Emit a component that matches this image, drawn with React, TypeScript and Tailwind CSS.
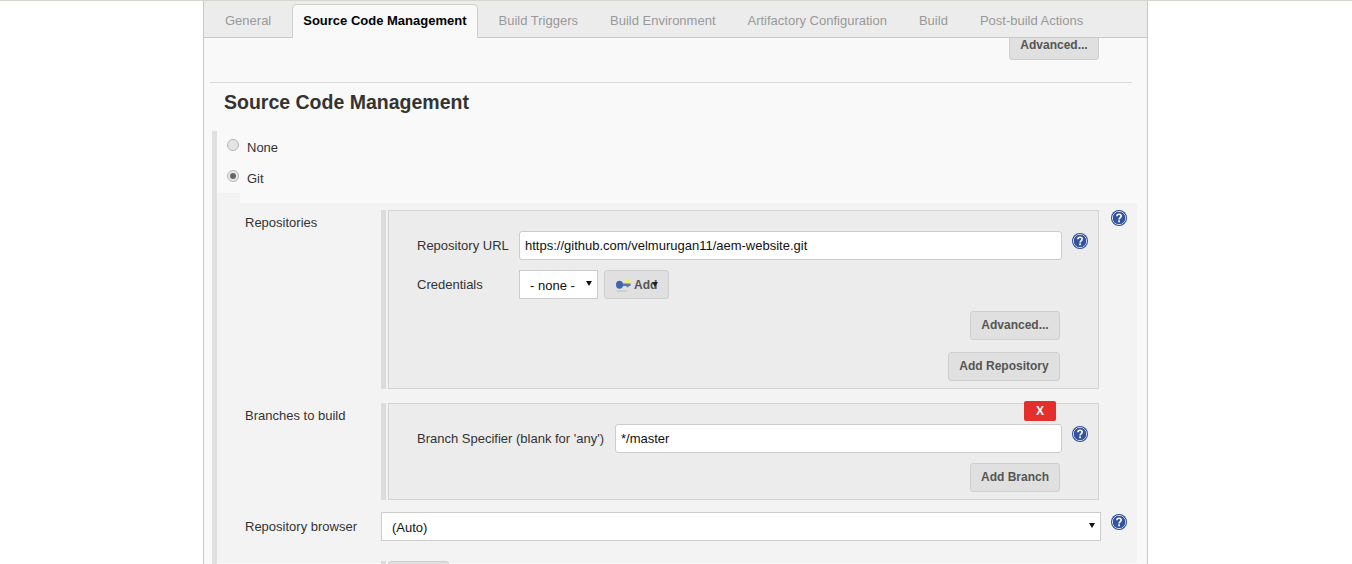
const TABS = [
  "General",
  "Source Code Management",
  "Build Triggers",
  "Build Environment",
  "Artifactory Configuration",
  "Build",
  "Post-build Actions",
];

function HelpIcon() {
  return (
    <svg width="16" height="16" viewBox="0 0 16 16" className="shrink-0 block">
      <circle cx="8" cy="8" r="8" fill="#2f4c96" />
      <circle cx="8" cy="8" r="6.6" fill="none" stroke="#dfe5f3" strokeWidth="0.9" />
      <circle cx="8" cy="8" r="6" fill="#33539f" />
      <path d="M5.9 6.2c0-1.3 1-2 2.2-2s2.1.8 2.1 1.9c0 1.7-2.1 1.7-2.1 3.3" fill="none" stroke="#fff" strokeWidth="1.6" />
      <rect x="7.2" y="10.4" width="1.8" height="1.8" fill="#fff" />
    </svg>
  );
}

function KeyIcon() {
  return (
    <svg width="16" height="16" viewBox="0 0 16 16" className="shrink-0 block">
      <ellipse cx="7" cy="14" rx="6" ry="1" fill="#cdcdcd" />
      <rect x="10" y="2.5" width="4" height="3.5" fill="#f5f04a" />
      <path d="M6 6.5h9.5v2.6h-2v1.2h-2v-1.2H6z" fill="#5577bb" />
      <ellipse cx="4.5" cy="7.8" rx="3.5" ry="4" fill="#3f63ad" />
    </svg>
  );
}

function Btn({ children, className = "" }: { children: React.ReactNode; className?: string }) {
  return (
    <button
      className={`h-[29px] rounded-[3px] border border-[#cfcfcf] bg-[#e0e0e0] text-[12px] font-bold text-[#555] ${className}`}
    >
      {children}
    </button>
  );
}

function Strip() {
  return <div className="w-[5px] shrink-0 bg-[#dcdcdc]" />;
}

function Caret() {
  return (
    <span className="pointer-events-none absolute right-[6px] top-[11px] h-0 w-0 border-x-[3px] border-t-[5px] border-x-transparent border-t-[#111]" />
  );
}

export default function App() {
  return (
    <div className="h-[564px] overflow-hidden bg-white border-t border-[#d3d7cf] font-['Liberation_Sans',Arial,sans-serif] text-[13px] text-[#333]">
      <div className="ml-[203px] w-[945px] h-full border-x border-[#c8c8c8] bg-[#f9f9f9]">
        {/* Tabs */}
        <div className="relative z-10 flex h-[37px] gap-[10px] border-b border-[#c8c8c8] bg-[#ececec] pl-[10px] pt-[3px]">
          {TABS.map((tab) =>
            tab === "Source Code Management" ? (
              <div
                key={tab}
                className="h-[34px] rounded-t-[5px] border border-b-0 border-[#cfcfcf] bg-[#f9f9f9] px-[10px] pt-[8px] leading-[16px] font-bold text-black"
              >
                {tab}
              </div>
            ) : (
              <div key={tab} className="h-[33px] px-[11px] pt-[9px] leading-[16px] text-[#999]">
                {tab}
              </div>
            )
          )}
        </div>

        <div className="-mt-[8px] flex justify-end pr-[48px]">
          <Btn className="w-[90px] h-[30px]">Advanced...</Btn>
        </div>

        <div className="ml-[6px] mr-[15px] mt-[22px] border-t border-[#d9d9d9]" />
        <h2 className="pl-[20px] pt-[8px] h-[48px] text-[19.5px] leading-[22px] font-bold text-[#333]">
          Source Code Management
        </h2>

        {/* SCM block */}
        <div className="ml-[8px] border-l-[5px] border-[#e0e0e0] h-[500px]">
          <div className="flex h-[32px] items-center pl-[10px]">
            <span className="-mt-[4px] block h-[12px] w-[12px] rounded-full border border-[#b5b5b5] bg-[#e4e4e4]" />
            <span className="ml-[8px] mt-[2px]">None</span>
          </div>
          <div className="flex h-[30px] items-center pl-[10px]">
            <span className="-mt-[4px] flex h-[12px] w-[12px] items-center justify-center rounded-full border border-[#b5b5b5] bg-[#e8e8e8]">
              <span className="block h-[6px] w-[6px] rounded-full bg-[#666]" />
            </span>
            <span className="ml-[8px] mt-[2px]">Git</span>
          </div>
          <div className="h-[10px] w-[23px] bg-[#f3f3f3]" />

          <div className="h-[360px] w-[920px] bg-[#f3f3f3] pt-[7px]">
            {/* Repositories */}
            <div className="flex">
              <div className="w-[164px] shrink-0 pl-[28px] pt-[5px] leading-[15px]">Repositories</div>
              <Strip />
              <div className="ml-[2px] h-[179px] w-[711px] border border-[#d3d3d3] bg-[#ececec] pl-[28px] pr-[10px] pt-[20px]">
                <div className="flex h-[29px] items-center">
                  <span className="w-[102px] shrink-0">Repository URL</span>
                  <input
                    readOnly
                    value="https://github.com/velmurugan11/aem-website.git"
                    className="h-[29px] w-[543px] rounded-[3px] border border-[#ccc] bg-white px-[5px] text-[13px] text-[#111] outline-none"
                  />
                  <span className="ml-[10px] -mt-[9px]"><HelpIcon /></span>
                </div>
                <div className="mt-[10px] flex h-[29px] items-center">
                  <span className="w-[102px] shrink-0">Credentials</span>
                  <div className="relative h-[29px] w-[79px]">
                    <select className="h-full w-full appearance-none border border-[#ccc] bg-white pl-[10px] pt-[2px] text-[13px] text-[#111]">
                      <option>- none -</option>
                    </select>
                    <Caret />
                  </div>
                  <Btn className="relative ml-[6px] flex w-[65px] items-center pl-[10px]">
                    <KeyIcon />
                    <span className="ml-[3px]">Add</span>
                    <span className="absolute left-[47px] top-[11px] h-0 w-0 border-x-[3px] border-t-[5px] border-x-transparent border-t-[#222]" />
                  </Btn>
                </div>
                <div className="mt-[12px] flex justify-end pr-[28px]">
                  <Btn className="w-[90px] pb-[2px]">Advanced...</Btn>
                </div>
                <div className="mt-[12px] flex justify-end pr-[28px]">
                  <Btn className="w-[112px] pb-[2px]">Add Repository</Btn>
                </div>
              </div>
              <span className="ml-[12px]"><HelpIcon /></span>
            </div>

            {/* Branches */}
            <div className="mt-[14px] flex">
              <div className="w-[164px] shrink-0 pl-[28px] pt-[5px] leading-[15px]">Branches to build</div>
              <Strip />
              <div className="relative ml-[2px] h-[97px] w-[711px] border border-[#d3d3d3] bg-[#ececec] pl-[28px] pt-[20px]">
                <div className="absolute left-[635px] -top-[3px] flex h-[20px] w-[32px] items-center justify-center rounded-[2px] bg-[#e4302c] text-[12px] font-bold text-white">
                  X
                </div>
                <div className="flex h-[29px] items-center">
                  <span className="w-[198px] shrink-0">Branch Specifier (blank for 'any')</span>
                  <input
                    readOnly
                    value="*/master"
                    className="h-[29px] w-[447px] rounded-[3px] border border-[#ccc] bg-white px-[5px] text-[13px] text-[#111] outline-none"
                  />
                  <span className="ml-[10px] -mt-[9px]"><HelpIcon /></span>
                </div>
                <div className="mt-[10px] flex justify-end pr-[38px]">
                  <Btn className="w-[90px] pb-[2px]">Add Branch</Btn>
                </div>
              </div>
            </div>

            {/* Repository browser */}
            <div className="mt-[12px] flex">
              <div className="w-[164px] shrink-0 pl-[28px] pt-[7px] leading-[15px]">Repository browser</div>
              <div className="relative h-[29px] w-[720px]">
                <select className="h-full w-full appearance-none border border-[#ccc] bg-white pl-[10px] pt-[3px] text-[13px] text-[#111]">
                  <option>(Auto)</option>
                </select>
                <Caret />
              </div>
              <span className="ml-[10px] mt-[2px]"><HelpIcon /></span>
            </div>

            {/* Additional behaviours, cut off by the window */}
            <div className="mt-[20px] flex h-[20px]">
              <div className="w-[164px] shrink-0" />
              <Strip />
              <div className="ml-[2px] w-[61px] rounded-t-[3px] border border-[#cfcfcf] bg-[#e0e0e0]" />
            </div>
          </div>
        </div>
      </div>
    </div>
  );
}
